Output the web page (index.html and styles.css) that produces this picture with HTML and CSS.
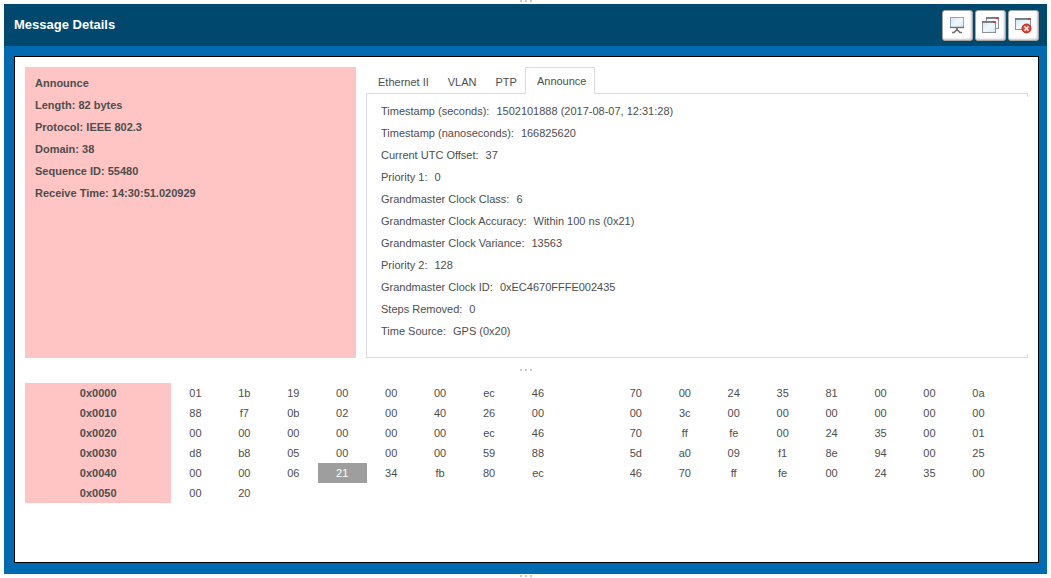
FILE: index.html
```html
<!DOCTYPE html>
<html lang="en">
<head>
<meta charset="utf-8">
<title>Message Details</title>
<link rel="stylesheet" href="styles.css">
</head>
<body>
<div class="split-edge split-top"><span class="grip"><i></i><i></i><i></i></span></div>
<main class="window">
  <header class="titlebar">
    <h1>Message Details</h1>
    <div class="tools">
      <button type="button" class="tool" aria-label="Dock">
        <svg width="17" height="17" viewBox="0 0 17 17">
          <defs><linearGradient id="glass" x1="0" y1="0" x2="1" y2="1"><stop offset="0" stop-color="#cfe3f3"/><stop offset=".5" stop-color="#f1f8fd"/><stop offset="1" stop-color="#d3e6f4"/></linearGradient></defs>
          <rect x="1.500" y="0.500" width="13" height="10" fill="url(#glass)" stroke="#8aa9c8"/>
          <path d="M1 10.500h14" stroke="#66707b" stroke-width="1.400"/>
          <path d="M8 11v2" stroke="#8a8a8a" stroke-width="2"/>
          <path d="M3 15.500h2l3-2.800l3 2.800h2" fill="none" stroke="#707070" stroke-width="1.600"/>
        </svg>
      </button>
      <button type="button" class="tool" aria-label="Restore">
        <svg width="17" height="17" viewBox="0 0 17 17">
          <rect x="4.500" y="0.500" width="12" height="11" fill="#f4f8fb" stroke="#8f9194"/>
          <path d="M4 1h13" stroke="#74797e" stroke-width="1.800"/>
          <path d="M14 1h2" stroke="#d63a2f" stroke-width="1.800"/>
          <rect x="0.500" y="4.500" width="13" height="11" fill="url(#glass)" stroke="#8f9194"/>
          <path d="M0 5h14" stroke="#74797e" stroke-width="1.800"/>
          <path d="M11 5h2" stroke="#d63a2f" stroke-width="1.800"/>
        </svg>
      </button>
      <button type="button" class="tool" aria-label="Close">
        <svg width="17" height="17" viewBox="0 0 17 17">
          <rect x="0.500" y="1.500" width="15" height="11" fill="url(#glass)" stroke="#8f9194"/>
          <path d="M0 2h16" stroke="#74797e" stroke-width="1.800"/>
          <path d="M13 2h2" stroke="#d63a2f" stroke-width="1.800"/>
          <circle cx="11.500" cy="11.500" r="4.500" fill="#dc4a38" stroke="#b8291c"/>
          <path d="M9.500 9.500l4 4m0-4l-4 4" stroke="#fff" stroke-width="1.500"/>
        </svg>
      </button>
    </div>
  </header>
  <div class="panel">
    <div class="overview">
      <section class="summary">
        <p>Announce</p>
        <p>Length: 82 bytes</p>
        <p>Protocol: IEEE 802.3</p>
        <p>Domain: 38</p>
        <p>Sequence ID: 55480</p>
        <p>Receive Time: 14:30:51.020929</p>
      </section>
      <section class="details">
        <div class="tabs" role="tablist">
          <button type="button" role="tab" class="tab">Ethernet II</button>
          <button type="button" role="tab" class="tab">VLAN</button>
          <button type="button" role="tab" class="tab">PTP</button>
          <button type="button" role="tab" class="tab selected" aria-selected="true">Announce</button>
        </div>
        <dl class="fields" role="tabpanel">
          <div><dt>Timestamp (seconds):</dt><dd>1502101888 (2017-08-07, 12:31:28)</dd></div>
          <div><dt>Timestamp (nanoseconds):</dt><dd>166825620</dd></div>
          <div><dt>Current UTC Offset:</dt><dd>37</dd></div>
          <div><dt>Priority 1:</dt><dd>0</dd></div>
          <div><dt>Grandmaster Clock Class:</dt><dd>6</dd></div>
          <div><dt>Grandmaster Clock Accuracy:</dt><dd>Within 100 ns (0x21)</dd></div>
          <div><dt>Grandmaster Clock Variance:</dt><dd>13563</dd></div>
          <div><dt>Priority 2:</dt><dd>128</dd></div>
          <div><dt>Grandmaster Clock ID:</dt><dd>0xEC4670FFFE002435</dd></div>
          <div><dt>Steps Removed:</dt><dd>0</dd></div>
          <div><dt>Time Source:</dt><dd>GPS (0x20)</dd></div>
        </dl>
      </section>
    </div>
    <div class="splitter"><span class="grip"><i></i><i></i><i></i></span></div>
    <table class="hex">
      <colgroup><col class="offset"><col class="byte" span="17"><col></colgroup>
      <tbody>
        <tr><th scope="row">0x0000</th><td>01</td><td>1b</td><td>19</td><td>00</td><td>00</td><td>00</td><td>ec</td><td>46</td><td></td><td>70</td><td>00</td><td>24</td><td>35</td><td>81</td><td>00</td><td>00</td><td>0a</td></tr>
        <tr><th scope="row">0x0010</th><td>88</td><td>f7</td><td>0b</td><td>02</td><td>00</td><td>40</td><td>26</td><td>00</td><td></td><td>00</td><td>3c</td><td>00</td><td>00</td><td>00</td><td>00</td><td>00</td><td>00</td></tr>
        <tr><th scope="row">0x0020</th><td>00</td><td>00</td><td>00</td><td>00</td><td>00</td><td>00</td><td>ec</td><td>46</td><td></td><td>70</td><td>ff</td><td>fe</td><td>00</td><td>24</td><td>35</td><td>00</td><td>01</td></tr>
        <tr><th scope="row">0x0030</th><td>d8</td><td>b8</td><td>05</td><td>00</td><td>00</td><td>00</td><td>59</td><td>88</td><td></td><td>5d</td><td>a0</td><td>09</td><td>f1</td><td>8e</td><td>94</td><td>00</td><td>25</td></tr>
        <tr><th scope="row">0x0040</th><td>00</td><td>00</td><td>06</td><td class="marked">21</td><td>34</td><td>fb</td><td>80</td><td>ec</td><td></td><td>46</td><td>70</td><td>ff</td><td>fe</td><td>00</td><td>24</td><td>35</td><td>00</td></tr>
        <tr><th scope="row">0x0050</th><td>00</td><td>20</td></tr>
      </tbody>
    </table>
  </div>
</main>
<div class="split-edge split-bottom"><span class="grip"><i></i><i></i><i></i></span></div>
</body>
</html>
```
FILE: styles.css
```css
* { box-sizing: border-box; }
body {
  margin: 0;
  padding: 0 4px;
  min-height: 100vh;
  display: flex;
  flex-direction: column;
  background: #fefefe;
  color: #4d4d4d;
  font: 11px/22px "Liberation Sans", Arial, sans-serif;
}
p, dl, dd, h1 { margin: 0; }
button { font: inherit; color: inherit; margin: 0; cursor: pointer; }

.grip { display: flex; gap: 3px; }
.grip i { width: 2px; height: 2px; background: #c8c8c8; }
.split-edge { height: 4px; display: flex; justify-content: center; }
.split-bottom { padding-top: 1px; }

.window {
  flex: 1;
  display: flex;
  flex-direction: column;
  background: #006ab3;
}
.titlebar {
  display: flex;
  align-items: center;
  justify-content: space-between;
  height: 42px;
  padding: 0 8px 0 10px;
  background: #00486e;
}
.titlebar h1 { color: #fff; font-size: 13px; font-weight: bold; }
.tools { display: flex; gap: 2px; }
.tool {
  display: flex;
  align-items: center;
  justify-content: center;
  width: 31px;
  height: 31px;
  padding: 0;
  border: 1px solid #a5a5a5;
  border-radius: 3px;
  background: #fff;
  box-shadow: inset -1px -1px 2px #c4c4c4;
}

.panel {
  flex: 1;
  margin: 10px 8px 11px 10px;
  padding: 10px;
  background: #fff;
  border: 1px solid #000;
}
.overview { display: grid; grid-template-columns: 1fr 2fr; gap: 10px; }
.summary { padding: 5px 10px; background: #ffc5c4; font-weight: bold; }

.tabs { display: flex; }
.tab {
  height: 27px;
  padding: 2px 8px 0 11px;
  border: 1px solid transparent;
  border-bottom: 0;
  background: none;
  line-height: 22px;
}
.tab + .tab { margin-left: -2px; }
.tab.selected {
  position: relative;
  z-index: 1;
  margin-left: -1px;
  padding-top: 0;
  border-color: #dcdcdc;
  background: #fff;
}
.fields {
  position: relative;
  margin-top: -1px;
  padding: 6px 14px 15px;
  border: 1px solid #dcdcdc;
}
/* leaves only short corner ticks of the right border */
.fields::after {
  content: "";
  position: absolute;
  top: 3px;
  bottom: 3px;
  right: -1px;
  width: 1px;
  background: #fff;
}
.fields div { display: flex; gap: 7px; }

.splitter { display: flex; justify-content: center; height: 25px; padding: 11px 2px 0 0; }

.hex { width: 100%; table-layout: fixed; border-collapse: collapse; }
.offset { width: 14.6%; }
.byte { width: 4.88%; }
.hex th, .hex td { height: 20px; padding: 0; line-height: 20px; text-align: center; }
.hex th { background: #ffc5c4; }
.hex td { padding-right: 1px; }
.hex .marked { background: #9e9e9e; color: #fff; }
```
